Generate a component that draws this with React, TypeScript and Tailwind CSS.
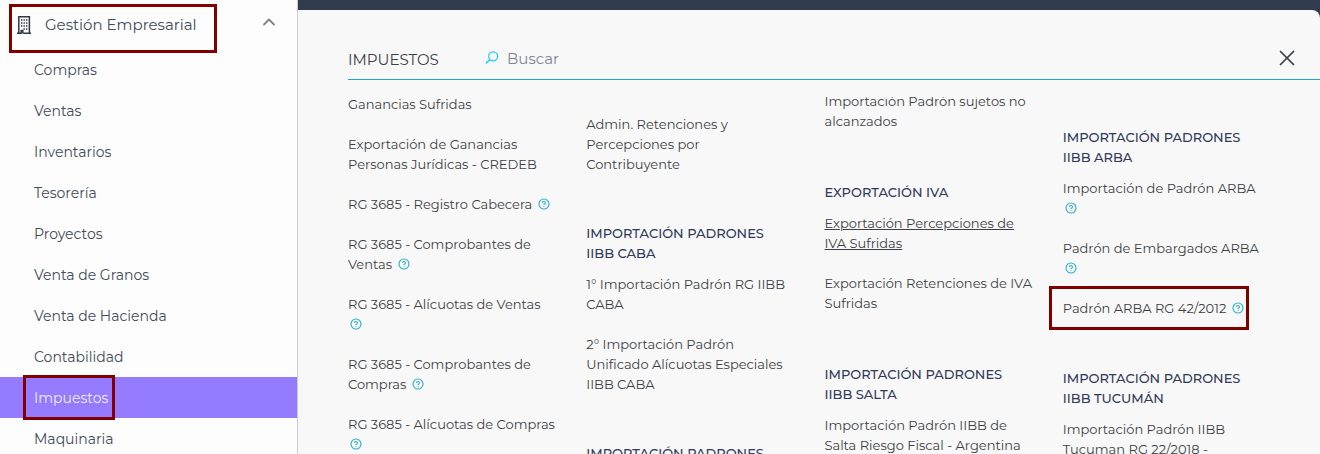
import { ChevronUp, CircleQuestionMark, X } from "lucide-react";
import clsx from "clsx";

type Item = { lines: string[]; help?: boolean; active?: boolean; boxed?: boolean };
type Group = { title?: string[]; items: Item[] };

const modules = [
  "Compras",
  "Ventas",
  "Inventarios",
  "Tesorería",
  "Proyectos",
  "Venta de Granos",
  "Venta de Hacienda",
  "Contabilidad",
  "Impuestos",
  "Maquinaria",
];

const columns: { spacing: string; groups: Group[] }[] = [
  {
    spacing: "gap-[50px] pt-[3px]",
    groups: [
      {
        items: [
          { lines: ["Ganancias Sufridas"] },
          { lines: ["Exportación de Ganancias", "Personas Jurídicas - CREDEB"] },
          { lines: ["RG 3685 - Registro Cabecera"], help: true },
          { lines: ["RG 3685 - Comprobantes de", "Ventas"], help: true },
          { lines: ["RG 3685 - Alícuotas de Ventas", ""], help: true },
          { lines: ["RG 3685 - Comprobantes de", "Compras"], help: true },
          { lines: ["RG 3685 - Alícuotas de Compras", ""], help: true },
        ],
      },
    ],
  },
  {
    spacing: "gap-[49px] pt-[23px]",
    groups: [
      {
        items: [
          { lines: ["Admin. Retenciones y", "Percepciones por", "Contribuyente"] },
        ],
      },
      {
        title: ["IMPORTACIÓN PADRONES", "IIBB CABA"],
        items: [
          { lines: ["1° Importación Padrón RG IIBB", "CABA"] },
          {
            lines: [
              "2° Importación Padrón",
              "Unificado Alícuotas Especiales",
              "IIBB CABA",
            ],
          },
        ],
      },
      { title: ["IMPORTACIÓN PADRONES"], items: [] },
    ],
  },
  {
    spacing: "gap-[51px] pt-0",
    groups: [
      { items: [{ lines: ["Importación Padrón sujetos no", "alcanzados"] }] },
      {
        title: ["EXPORTACIÓN IVA"],
        items: [
          { lines: ["Exportación Percepciones de", "IVA Sufridas"], active: true },
          { lines: ["Exportación Retenciones de IVA", "Sufridas"] },
        ],
      },
      {
        title: ["IMPORTACIÓN PADRONES", "IIBB SALTA"],
        items: [
          { lines: ["Importación Padrón IIBB de", "Salta Riesgo Fiscal - Argentina"] },
        ],
      },
    ],
  },
  {
    spacing: "gap-[50px] pt-9",
    groups: [
      {
        title: ["IMPORTACIÓN PADRONES", "IIBB ARBA"],
        items: [
          { lines: ["Importación de Padrón ARBA", ""], help: true },
          { lines: ["Padrón de Embargados ARBA", ""], help: true },
          { lines: ["Padrón ARBA RG 42/2012"], help: true, boxed: true },
        ],
      },
      {
        title: ["IMPORTACIÓN PADRONES", "IIBB TUCUMÁN"],
        items: [
          { lines: ["Importación Padrón IIBB", "Tucuman RG 22/2018 -"] },
        ],
      },
    ],
  },
];

const Highlight = ({ className }: { className: string }) => (
  <span
    className={clsx(
      "pointer-events-none absolute z-10 border-3 border-[#800000]",
      className
    )}
  />
);

const BuildingIcon = () => (
  <svg width="14" height="18" viewBox="0 0 14 18" fill="none" className="shrink-0">
    <path
      d="M1.8 17V.8h10.6V17M0 17.2h4.8M6.4 17.2H14M4.2 17.5v-3h1.6v3"
      stroke="#2d3748"
      strokeWidth="1.5"
    />
    <path
      d="M4 4h1.4M6.5 4h1.4M9 4h1.4M4 7h1.4M6.5 7h1.4M9 7h1.4M4 10h1.4M6.5 10h1.4M9 10h1.4M6.5 13h1.4M9 13h1.4"
      stroke="#2d3748"
      strokeWidth="1.4"
    />
  </svg>
);

const SearchIcon = () => (
  <svg width="14" height="14" viewBox="0 0 14 14" fill="none" className="shrink-0">
    <circle cx="8.2" cy="5.3" r="4.5" stroke="#22cdf5" strokeWidth="1.3" />
    <path d="M5 8.5 1 12.3" stroke="#22cdf5" strokeWidth="1.6" />
  </svg>
);

const Sidebar = () => (
  <nav className="w-[298px] shrink-0 border-r border-[#cccccc] bg-[#fdfdfd] text-sm text-[#414b5a]">
    <button
      type="button"
      aria-expanded="true"
      className="relative flex h-[49px] w-full items-center pt-px pl-[17px] pr-[18px] text-left text-[15px]"
    >
      <BuildingIcon />
      <span className="ml-[14px] flex-1">Gestión Empresarial</span>
      <ChevronUp size={20} strokeWidth={2.2} className="-mt-1.5 text-[#7d838d]" />
      <Highlight className="left-[9px] top-1 h-[49px] w-[208px]" />
    </button>
    <ul>
      {modules.map((name) => (
        <li key={name}>
          <a
            href="#"
            className={clsx(
              "relative flex h-[41px] items-center pl-[34px]",
              name === "Impuestos" && "bg-[#947bff] text-[#efeaff]"
            )}
          >
            {name}
            {name === "Impuestos" && (
              <Highlight className="-top-0.5 left-[23px] h-[45px] w-[92px]" />
            )}
          </a>
        </li>
      ))}
    </ul>
  </nav>
);

const MenuItem = ({ item }: { item: Item }) => (
  <li className="relative">
    <a href="#" className={clsx(item.active && "underline underline-offset-1")}>
      {item.lines.map((line, i) => (
        <span key={i} className="block">
          {line}
          {item.help && i === item.lines.length - 1 && (
            <CircleQuestionMark
              size={12}
              strokeWidth={2.3}
              className={clsx(
                "inline align-[-1px] text-[#2fb0cb]",
                line ? "ml-1.5" : "ml-0.5"
              )}
            />
          )}
        </span>
      ))}
    </a>
    {item.boxed && <Highlight className="-left-[14px] -top-3 h-11 w-[200px]" />}
  </li>
);

const App = () => {
  return (
    <div className="flex h-screen overflow-hidden bg-[#323c4f] font-['Montserrat','Inter',sans-serif] text-[15px]">
      <Sidebar />
      <main className="mt-2.5 flex min-w-0 flex-1 flex-col rounded-tr-lg bg-[#f8f8f8] pl-[50px] text-[#3c3f46]">
        <header className="flex h-[70px] shrink-0 items-end border-b border-[#25a5c5] pb-2">
          <h1 className="w-[137px] leading-[22px]">IMPUESTOS</h1>
          <label className="flex flex-1 items-center gap-2">
            <SearchIcon />
            <input
              type="text"
              aria-label="Buscar"
              placeholder="Buscar"
              className="h-[26px] w-full bg-transparent outline-none placeholder:text-[#7d8794]"
            />
          </label>
          <button type="button" aria-label="Cerrar" className="mr-5">
            <X size={26} strokeWidth={1.6} />
          </button>
        </header>
        <div className="mt-[17px] min-h-0 flex-1 overflow-hidden">
          <div className="-mt-1.5 mr-[19px] grid grid-cols-4 text-[13px] leading-5">
            {columns.map((column, c) => (
              <div
                key={c}
                className={clsx("flex flex-col whitespace-nowrap", column.spacing)}
              >
                {column.groups.map((group, g) => (
                  <section key={g}>
                    {group.title && (
                      <h2 className="mb-[11px] font-medium text-[#323a5c]">
                        {group.title.map((line) => (
                          <span key={line} className="block">
                            {line}
                          </span>
                        ))}
                      </h2>
                    )}
                    <ul className="flex flex-col gap-5">
                      {group.items.map((item, i) => (
                        <MenuItem key={i} item={item} />
                      ))}
                    </ul>
                  </section>
                ))}
              </div>
            ))}
          </div>
        </div>
      </main>
    </div>
  );
};

export default App;
